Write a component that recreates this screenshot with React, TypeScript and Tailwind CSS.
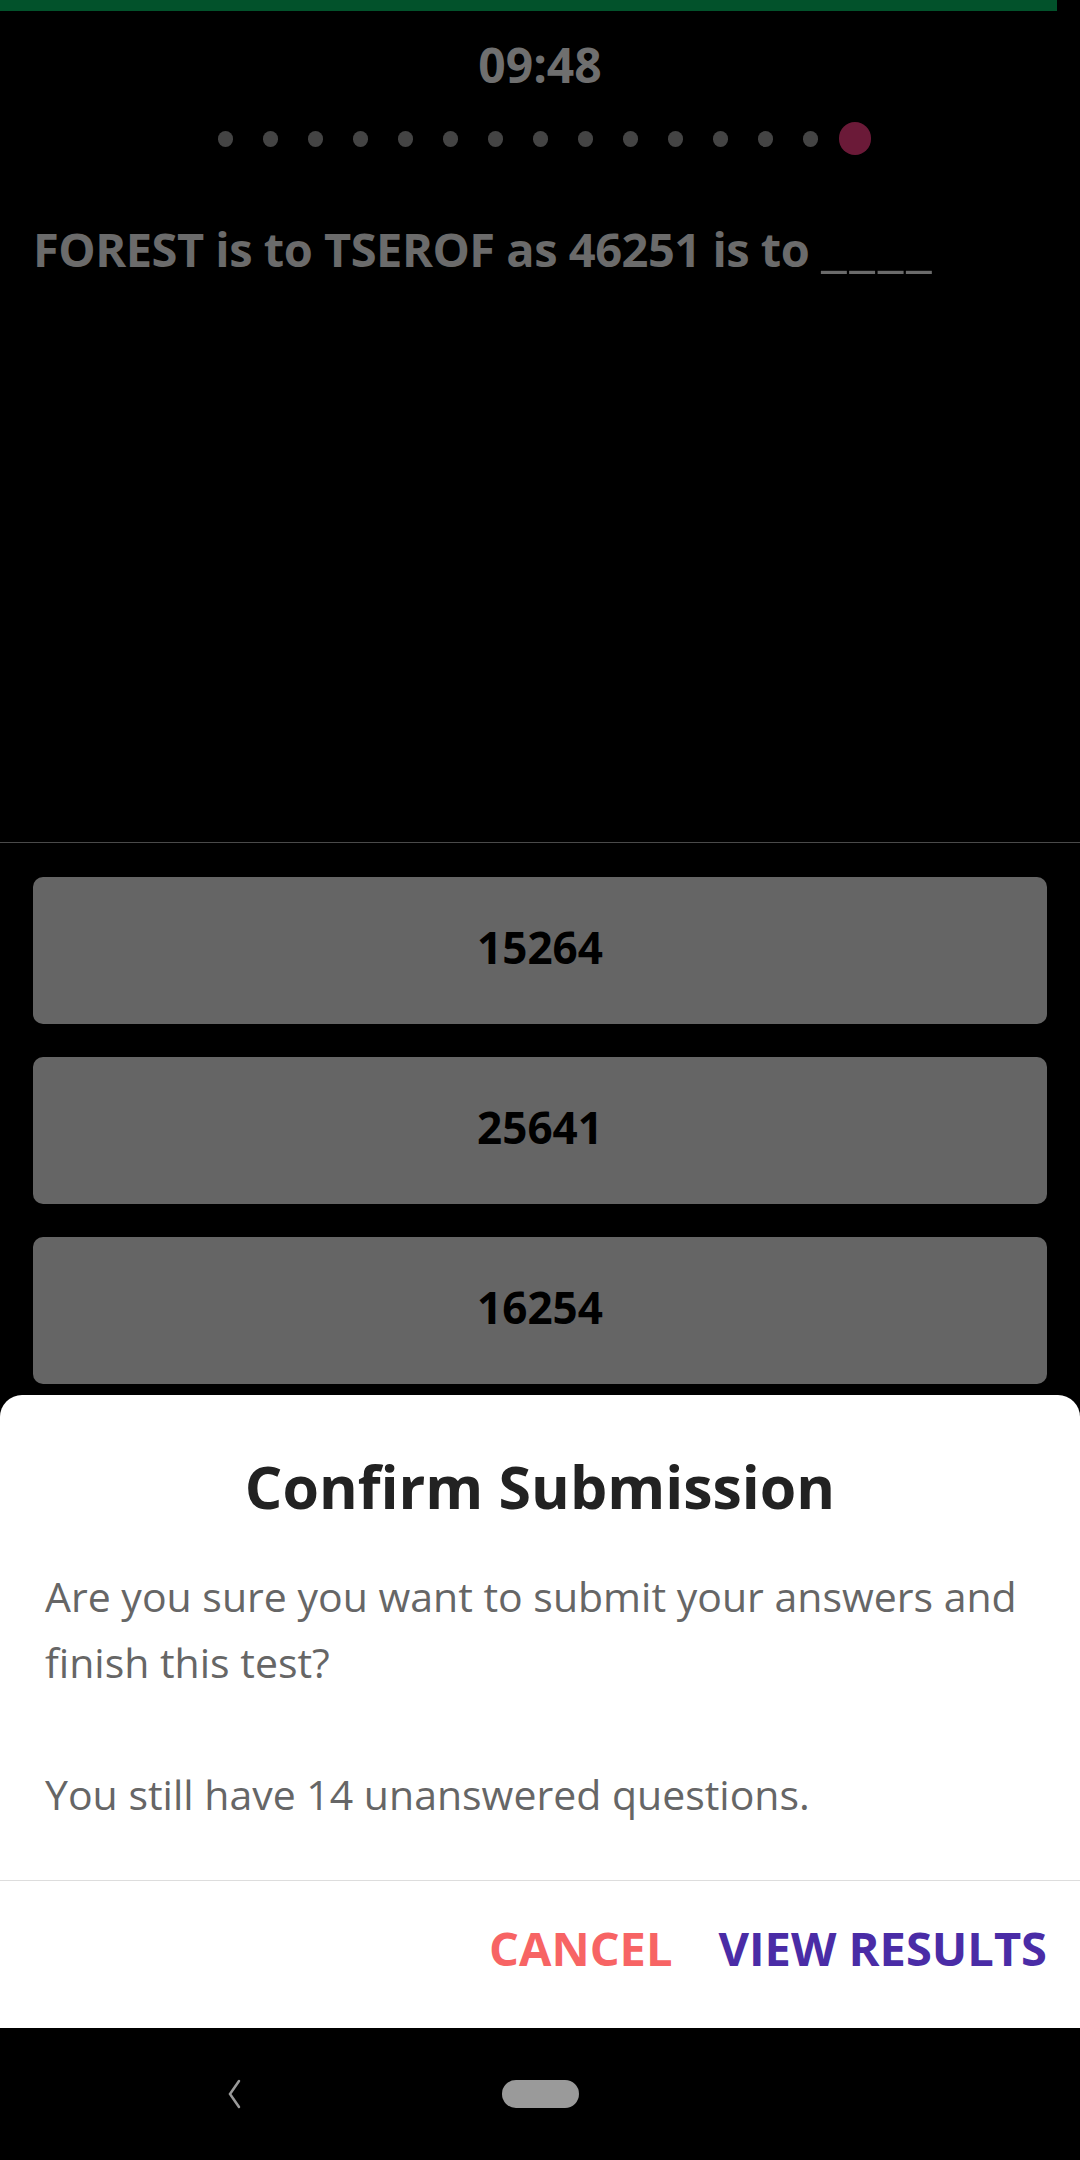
import React from 'react';

const options = ['15264', '25641', '16254'];

function Dots() {
  const total = 15;
  const current = 14;
  return (
    <div className="flex justify-center mt-[33px] h-[33px]">
      {Array.from({ length: total }).map((_, i) => (
        <div key={i} className="w-[45px] flex items-center justify-center">
          {i === current ? (
            <div className="w-[32px] h-[33px] rounded-full bg-[#6b1a38]" />
          ) : (
            <div className="w-[15px] h-[16px] rounded-full bg-[#444444]" />
          )}
        </div>
      ))}
    </div>
  );
}

function NavBar() {
  return (
    <div className="h-[132px] bg-black flex items-center">
      <div className="w-[502px] flex justify-end pr-[259px]">
        <svg width="18" height="30" viewBox="0 0 18 30" fill="none">
          <path d="M14 2 L5 15 L14 28" stroke="#9a9a9a" strokeWidth="2.5" strokeLinecap="round" />
        </svg>
      </div>
      <div className="w-[77px] h-[28px] rounded-full bg-[#9a9a9a]" />
    </div>
  );
}

export default function App() {
  return (
    <div
      className="relative w-[1080px] h-[2160px] bg-black flex flex-col overflow-hidden"
      style={{ fontFamily: '"Open Sans", "Noto Sans", sans-serif' }}
    >
      <div className="flex-1 flex flex-col">
        <div className="h-[843px] border-b border-[#4a4a4a] flex flex-col">
          <div className="h-[11px] w-[1057px] bg-[#02522b]" />
          <div className="mt-[30px] text-center text-[48px] leading-[48px] font-bold text-[#6f6f6f]">
            09:48
          </div>
          <Dots />
          <div className="mt-[66px] px-[33px] text-[47px] leading-[56px] font-bold text-[#6b6b6b] tracking-[-0.5px]">
            FOREST is to TSEROF as 46251 is to{' '}
            <span className="inline-block tracking-[2px] origin-left scale-x-[1.33]">____</span>
          </div>
        </div>
        <div className="flex flex-col gap-[33px] px-[33px] pt-[34px]">
          {options.map((o) => (
            <div
              key={o}
              className="h-[147px] rounded-[10px] bg-[#656565] flex items-center justify-center pb-[7px] text-[44px] font-bold text-black"
            >
              {o}
            </div>
          ))}
        </div>
      </div>
      <NavBar />

      <div className="absolute left-0 right-0 top-[1395px] h-[633px] bg-white rounded-t-[22px] flex flex-col">
        <div className="pt-[51px] text-center text-[59px] leading-[80px] font-bold text-[#222222]">
          Confirm Submission
        </div>
        <div className="mt-[37px] px-[45px] text-[41px] leading-[66px] text-[#666666] whitespace-pre-line">
          {'Are you sure you want to submit your answers and finish this test?\n\nYou still have 14 unanswered questions.'}
        </div>
        <div className="mt-auto border-t border-[#dddddd] h-[148px] flex items-center justify-end gap-[46px] pr-[33px] pb-[12px]">
          <span className="text-[47px] font-bold text-[#f76464]">CANCEL</span>
          <span className="text-[47px] font-bold text-[#4a2ca6]">VIEW RESULTS</span>
        </div>
      </div>
    </div>
  );
}
